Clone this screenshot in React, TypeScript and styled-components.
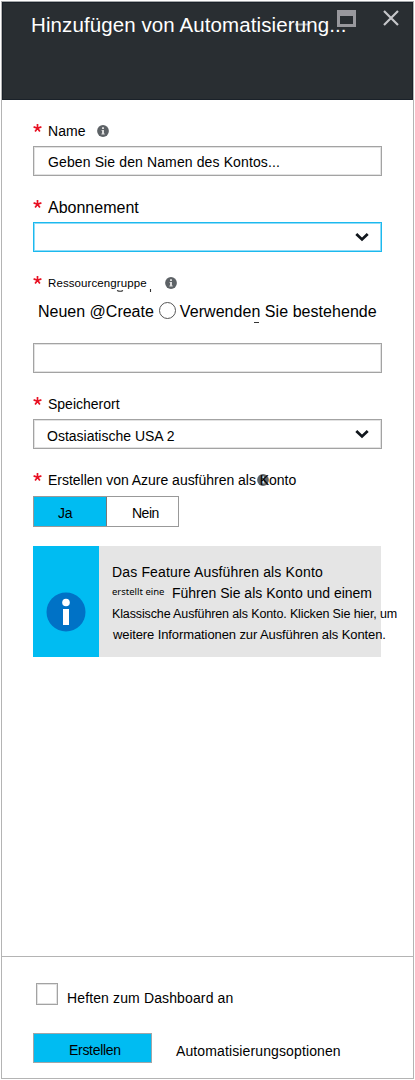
import React from "react";
import styled, { createGlobalStyle } from "styled-components";

const Global = createGlobalStyle`
  * { box-sizing: border-box; }
  body { margin: 0; background: #fff; font-family: "Liberation Sans", Arial, sans-serif; color: #000; }
`;

const Blade = styled.main`
  width: 415px;
  height: 1080px;
  padding: 1px;
  display: flex;
  flex-direction: column;
  overflow: hidden;
`;
const Frame = styled.div`
  flex: 1;
  width: 413px;
  display: flex;
  flex-direction: column;
  border: 1px solid #b4b4b4;
  border-top-color: #a5a8aa;
`;
const Header = styled.header`
  position: relative;
  height: 98px;
  flex: none;
  background: #292e32;
  border: 1px solid #1a2129;
  padding: 11px 0 0 28px;
`;
const WindowControls = styled.svg`
  position: absolute;
  top: 0;
  right: 0;
  width: 125px;
  height: 40px;
`;
const Text = styled.span<{ $size?: number; $spacing?: number; $line?: number }>`
  display: block;
  flex: none;
  white-space: pre;
  font-size: ${(p) => p.$size ?? 14}px;
  letter-spacing: ${(p) => p.$spacing ?? 0}px;
  line-height: ${(p) => p.$line ?? 20}px;
`;
const Title = styled(Text).attrs({ as: "h1" })`
  position: relative;
  margin: 0;
  color: #fff;
  font-weight: 400;
`;
const Form = styled.section`
  flex: 1;
  padding: 21px 0 0 31px;
`;
const Group = styled.div<{ $height?: number }>`
  height: ${(p) => p.$height ?? 76}px;
`;
const LabelRow = styled.div`
  position: relative;
  display: flex;
  height: 20px;
  margin-bottom: 5px;
`;
const Star = styled.svg`
  width: 9px;
  height: 9px;
  flex: none;
  margin: 3px 6px 0 0;
`;
const Info = styled.svg<{ $gap: number }>`
  width: 12px;
  height: 12px;
  flex: none;
  margin: 4px 0 0 ${(p) => p.$gap}px;
`;
const Specks = styled.svg`
  position: absolute;
  left: 80px;
  top: 16px;
  width: 160px;
  height: 36px;
`;
const LabelOver = styled.div`
  position: relative;
  display: flex;
`;
const InfoUnder = styled(Info)`
  position: absolute;
  left: 209px;
  top: 0;
`;
const OverText = styled(Text)`
  position: relative;
`;
const Field = styled.div<{ $active?: boolean; $indent?: number; $drop?: number }>`
  width: 349px;
  height: 30px;
  display: flex;
  align-items: center;
  justify-content: space-between;
  padding: ${(p) => p.$drop ?? 2}px 12px 0 ${(p) => p.$indent ?? 14}px;
  border: 1px solid ${(p) => (p.$active ? "#1cb9ee" : "#a3a3a3")};
  box-shadow: inset 0 0 0 1px ${(p) => (p.$active ? "#8fdcf8" : "#e2e2e2")};
`;
const Chevron = styled.svg<{ $lift?: number }>`
  width: 14px;
  height: 10px;
  margin: 0 0 ${(p) => p.$lift ?? 2}px auto;
`;
const RadioRow = styled.div`
  display: flex;
  height: 20px;
  margin: 8px 0 22px 5px;
`;
const Radio = styled.span`
  width: 17px;
  height: 17px;
  flex: none;
  margin: 1px 4px 0 5px;
  border: 1px solid #555;
  border-radius: 50%;
`;
const Toggle = styled.div`
  display: flex;
  width: 146px;
  height: 31px;
  margin: 6px 0 19px;
  border: 1px solid #999;
`;
const Choice = styled.div<{ $on?: boolean }>`
  width: ${(p) => (p.$on ? 73 : 71)}px;
  padding: 6px 0 0 ${(p) => (p.$on ? 24 : 25)}px;
  background: ${(p) => (p.$on ? "#00bcf2" : "#fff")};
  border-right: ${(p) => (p.$on ? "1px solid #777" : "none")};
`;
const Notice = styled.aside`
  display: flex;
  width: 348px;
  height: 111px;
  background: #e5e5e5;
`;
const NoticeMark = styled.div`
  width: 66px;
  flex: none;
  padding: 46px 0 0 13px;
  background: #00bcf2;
`;
const NoticeText = styled.div`
  flex: none;
  padding: 16px 0 0 13px;
`;
const NoticeLine = styled.div<{ $indent?: number }>`
  display: flex;
  height: 21px;
  padding-left: ${(p) => p.$indent ?? 0}px;
`;
const Lead = styled(Text)`
  width: 60px;
  font-family: "Noto Sans", "Open Sans", sans-serif;
`;
const Footer = styled.footer`
  height: 122px;
  flex: none;
  border-top: 1px solid #b4b4b4;
  padding: 26px 0 0 31px;
`;
const PinRow = styled.label`
  display: flex;
  height: 50px;
  padding-left: 3px;
`;
const CheckBox = styled.span`
  width: 22px;
  height: 22px;
  flex: none;
  margin-right: 9px;
  border: 1px solid #a3a3a3;
  box-shadow: inset 0 0 0 1px #e2e2e2;
`;
const PinText = styled(Text)`
  padding-top: 5px;
`;
const Actions = styled.div`
  display: flex;
`;
const Create = styled.div`
  width: 119px;
  height: 30px;
  padding: 6px 0 0 35px;
  margin-right: 24px;
  background: #00bcf2;
  border: 1px solid #a0a6a9;
`;
const Options = styled(Text)`
  padding-top: 8px;
`;

const Required = () => (
  <Star viewBox="0 0 9 9">
    <path d="M4.5 4.2V.1M4.5 4.2 8.4 2.9M4.5 4.2 6.9 7.6M4.5 4.2 2.1 7.6M4.5 4.2.6 2.9" stroke="#e81123" strokeWidth="1.7" fill="none" />
  </Star>
);
const InfoArt = () => (
  <>
    <circle cx="6" cy="6" r="5.9" fill="#5d6266" />
    <path d="M5 2.2h2v1.7H5zM4.6 4.9H7v3.7h.7v1H4.4v-1H5V5.9h-.4z" fill="#dcdcdc" />
  </>
);
const Down = ({ lift }: { lift?: number }) => (
  <Chevron $lift={lift} viewBox="0 0 14 10">
    <path d="m1.3 2 5.7 5.4L12.7 2" stroke="#10161c" strokeWidth="2.8" fill="none" />
  </Chevron>
);

export default function App() {
  return (
    <Blade>
      <Global />
      <Frame>
        <Header>
          <WindowControls viewBox="0 0 125 40">
            <path d="M8 21.5h14" stroke="#8f9296" strokeWidth="2" />
            <path d="M50 7h19v17H50zM53 13v8h13v-8z" fill="#98989d" fillRule="evenodd" />
            <path d="m97 8 14 14m0-14L97 22" stroke="#c5c6ca" strokeWidth="2.2" />
          </WindowControls>
          <Title $size={20.5} $spacing={0.1} $line={22}>Hinzufügen von Automatisierung...</Title>
        </Header>
        <Form>
          <Group>
            <LabelRow>
              <Required />
              <Text $spacing={0.1}>Name</Text>
              <Info $gap={11} viewBox="0 0 12 12"><InfoArt /></Info>
            </LabelRow>
            <Field><Text $spacing={0.12}>Geben Sie den Namen des Kontos...</Text></Field>
          </Group>
          <Group>
            <LabelRow>
              <Required />
              <Text $size={16} $line={21}>Abonnement</Text>
            </LabelRow>
            <Field $active><Down /></Field>
          </Group>
          <Group $height={121}>
            <LabelRow>
              <Required />
              <Text $size={11.5} $spacing={0.1}>Ressourcengruppe</Text>
              <Info $gap={18} viewBox="0 0 12 12"><InfoArt /></Info>
              <Specks viewBox="0 0 160 36">
                <path d="M4 1.5q3.500 1.600 6 0M37.500 0v3M141 33.500h5" stroke="#333" strokeWidth="1.100" fill="none" />
              </Specks>
            </LabelRow>
            <RadioRow>
              <Text $size={16} $line={21}>Neuen @Create</Text>
              <Radio />
              <Text $size={16} $line={21} $spacing={0.05}>Verwenden Sie bestehende</Text>
            </RadioRow>
            <Field />
          </Group>
          <Group>
            <LabelRow>
              <Required />
              <Text>Speicherort</Text>
            </LabelRow>
            <Field $indent={13} $drop={4}><Text>Ostasiatische USA 2</Text><Down lift={4} /></Field>
          </Group>
          <LabelRow>
            <Required />
            <LabelOver>
              <InfoUnder $gap={0} viewBox="0 0 12 12"><InfoArt /></InfoUnder>
              <OverText $spacing={-0.02}>Erstellen von Azure ausführen als Konto</OverText>
            </LabelOver>
          </LabelRow>
          <Toggle>
            <Choice $on><Text $spacing={-0.2}>Ja</Text></Choice>
            <Choice><Text $spacing={-0.5}>Nein</Text></Choice>
          </Toggle>
          <Notice>
            <NoticeMark>
              <svg width="40" height="40" viewBox="0 0 40 40">
                <circle cx="20" cy="20" r="19.5" fill="#0072c6" />
                <circle cx="20" cy="10.5" r="3.8" fill="#fff" />
                <path d="M17 17h6v16h-6z" fill="#fff" />
              </svg>
            </NoticeMark>
            <NoticeText>
              <NoticeLine><Text $spacing={0.15}>Das Feature Ausführen als Konto</Text></NoticeLine>
              <NoticeLine>
                <Lead $size={9.5} $line={17}>erstellt eine</Lead>
                <Text>Führen Sie als Konto und einem</Text>
              </NoticeLine>
              <NoticeLine><Text $size={12.5} $spacing={-0.13}>Klassische Ausführen als Konto. Klicken Sie hier, um</Text></NoticeLine>
              <NoticeLine $indent={1}><Text $size={13} $spacing={-0.1}>weitere Informationen zur Ausführen als Konten.</Text></NoticeLine>
            </NoticeText>
          </Notice>
        </Form>
        <Footer>
          <PinRow>
            <CheckBox />
            <PinText $spacing={0.13}>Heften zum Dashboard an</PinText>
          </PinRow>
          <Actions>
            <Create><Text $spacing={-0.3}>Erstellen</Text></Create>
            <Options $spacing={0.12}>Automatisierungsoptionen</Options>
          </Actions>
        </Footer>
      </Frame>
    </Blade>
  );
}
